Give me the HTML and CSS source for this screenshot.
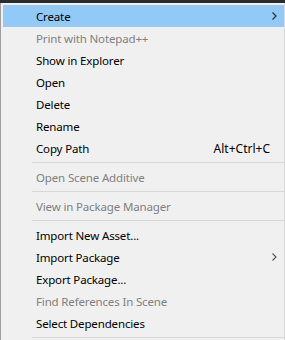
FILE: index.html
```html
<!DOCTYPE html>
<html>
<head>
    <meta charset="UTF-8">
    <title>Context Menu</title>
    <link rel="stylesheet" href="styles.css">
</head>
<body>
    <div class="window-edge"></div>
    <div class="menu">
        <div class="item active">
            <span class="label">Create</span>
            <svg class="arrow" width="5" height="8" viewBox="0 0 5 8"><polyline points="0.5,0.5 4,4 0.5,7.5" fill="none" stroke="#333" stroke-width="1.3"/></svg>
        </div>
        <div class="item disabled"><span class="label">Print with Notepad++</span></div>
        <div class="item"><span class="label">Show in Explorer</span></div>
        <div class="item"><span class="label">Open</span></div>
        <div class="item"><span class="label">Delete</span></div>
        <div class="item"><span class="label">Rename</span></div>
        <div class="item">
            <span class="label">Copy Path</span>
            <span class="shortcut">Alt+Ctrl+C</span>
        </div>
        <div class="separator"></div>
        <div class="item disabled"><span class="label">Open Scene Additive</span></div>
        <div class="separator"></div>
        <div class="item disabled"><span class="label">View in Package Manager</span></div>
        <div class="separator"></div>
        <div class="item"><span class="label">Import New Asset...</span></div>
        <div class="item">
            <span class="label">Import Package</span>
            <svg class="arrow" width="5" height="8" viewBox="0 0 5 8"><polyline points="0.5,0.5 4,4 0.5,7.5" fill="none" stroke="#555" stroke-width="1.1"/></svg>
        </div>
        <div class="item"><span class="label">Export Package...</span></div>
        <div class="item disabled"><span class="label">Find References In Scene</span></div>
        <div class="item"><span class="label">Select Dependencies</span></div>
        <div class="separator"></div>
    </div>
</body>
</html>
```

FILE: styles.css
```css
body {
    margin: 0;
    width: 285px;
    height: 340px;
    overflow: hidden;
    background-color: #f0f0f0;
    font-family: "Noto Sans", "Open Sans", sans-serif;
    font-size: 11.5px;
    letter-spacing: -0.15px;
    color: #000;
}

.window-edge {
    height: 3px;
    background-color: #2b2b2b;
}

.menu {
    border-left: 1px solid #a0a0a0;
    border-right: 1px solid #dadada;
    padding: 2px 0 0 2px;
}

.item {
    height: 22px;
    display: flex;
    align-items: center;
    padding-left: 33px;
    padding-right: 8px;
}

.item.active {
    background-color: #91c9f7;
}

.item.disabled {
    color: #808080;
}

.label {
    flex: 1;
    white-space: nowrap;
}

.shortcut {
    margin-right: 6px;
    font-size: 12px;
    letter-spacing: 0;
}

.arrow {
    margin-right: -1px;
}

.separator {
    height: 7px;
    margin-left: 29px;
    display: flex;
    align-items: center;
}

.separator::after {
    content: "";
    flex: 1;
    height: 1px;
    background-color: #d7d7d7;
}
```
